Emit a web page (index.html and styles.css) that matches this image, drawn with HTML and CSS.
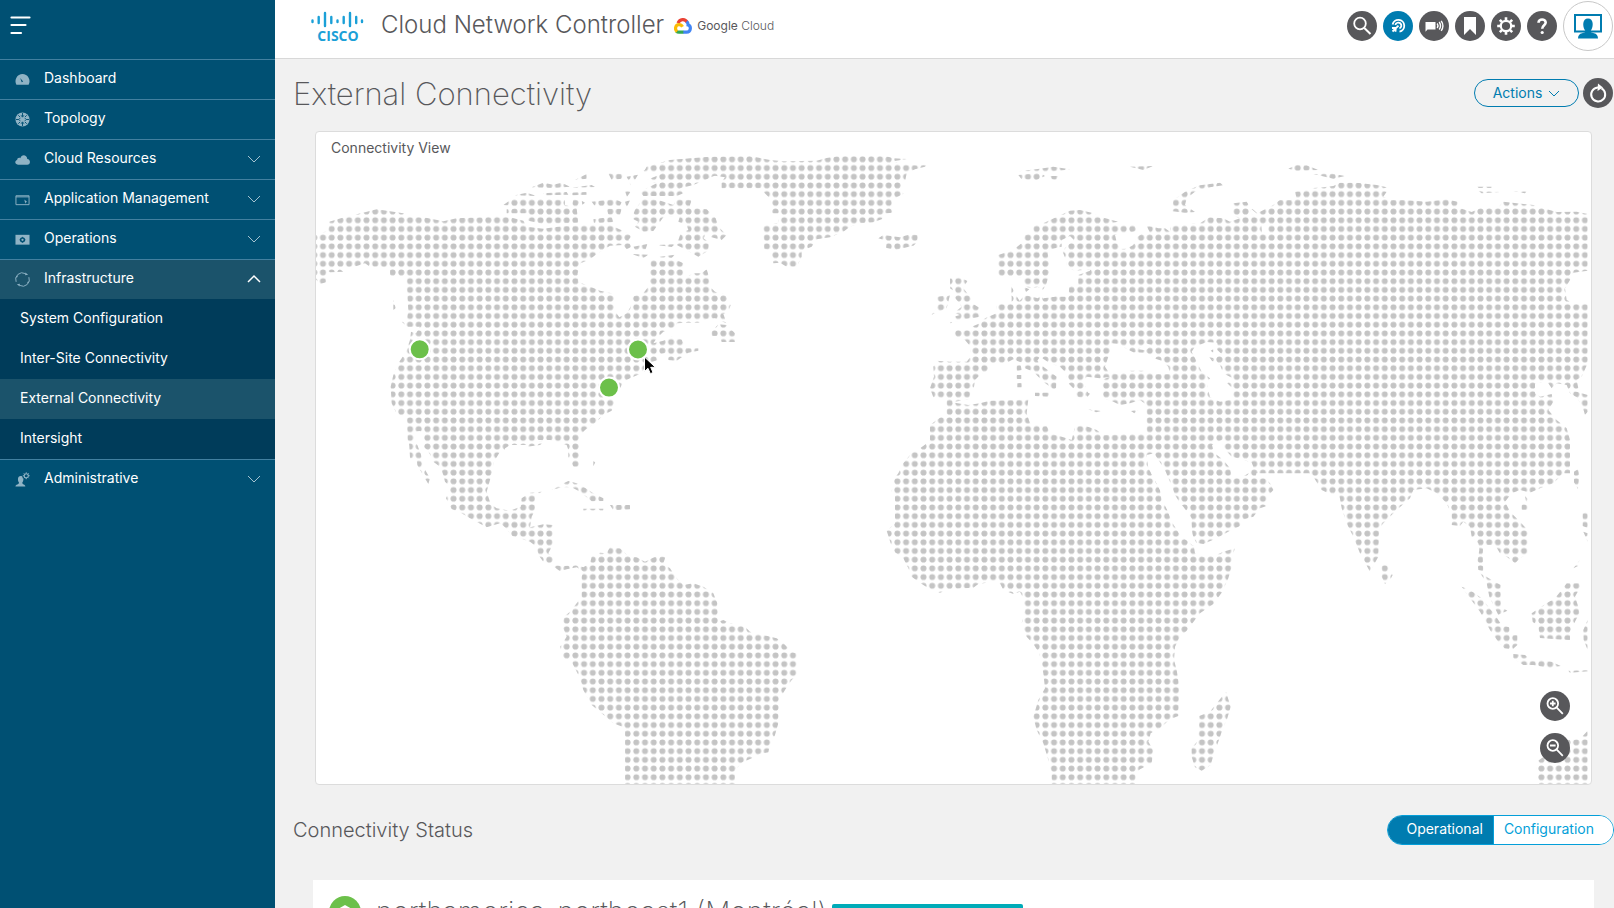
FILE: index.html
```html
<!DOCTYPE html>
<html lang="en">
<head>
<meta charset="utf-8">
<title>Cloud Network Controller</title>
<link rel="stylesheet" href="styles.css">
</head>
<body>
<div class="app">
  <aside class="sidebar">
    <div class="sidebar-top">
      <button class="menu-toggle" aria-label="Toggle menu">
        <svg width="22" height="20" viewBox="0 0 22 20" fill="none" stroke="#fff" stroke-width="2.2" stroke-linecap="round"><path d="M2.500 2.500h18M2.500 10h14M2.500 18h9.500"/></svg>
      </button>
    </div>
    <nav class="nav">
      <a class="nav-item" href="#dashboard">
        <svg class="nav-icon" viewBox="0 0 16 16"><path fill="currentColor" fill-rule="evenodd" d="M1.500 13.500A7.500 7.500 0 1 1 14.500 13.500zM5.500 6.500l1.700 4.300 1.500-.8z"/></svg>
        <span class="nav-label">Dashboard</span>
      </a>
      <a class="nav-item" href="#topology">
        <svg class="nav-icon" viewBox="0 0 16 16"><circle cx="8" cy="8" r="7.500" fill="currentColor"/><path d="M8 1v4M6.500 3.500L8 5.500l1.500-2M8 15v-4M6.500 12.500L8 10.500l1.500 2M1 8h3M5.500 6.500L4 8l1.500 1.500M15 8h-3M10.500 6.500L12 8l-1.500 1.500M3.500 3.500l2 2M12.500 3.500l-2 2M3.500 12.500l2-2M12.500 12.500l-2-2" stroke="#005073" fill="none"/></svg>
        <span class="nav-label">Topology</span>
      </a>
      <a class="nav-item" href="#resources">
        <svg class="nav-icon" viewBox="0 0 16 16"><path fill="currentColor" d="M3.200 13.500C-.4 13.500-.6 9.300 2.300 8.600 2.300 6.600 4.300 5.600 5.700 6.600c1-4 6.800-4.400 7.400.9 3.900.5 3.700 6-.1 6z"/></svg>
        <span class="nav-label">Cloud Resources</span>
        <svg class="chevron" viewBox="0 0 14 8"><path d="M1 1l6 6 6-6"/></svg>
      </a>
      <a class="nav-item" href="#applications">
        <svg class="nav-icon" viewBox="0 0 16 16"><path fill="none" stroke="currentColor" d="M1 4h14v9.500H1zM1 5.200h14"/><path fill="currentColor" d="M10 8l3 2.600-1.300.3-.8 1.500z"/></svg>
        <span class="nav-label">Application Management</span>
        <svg class="chevron" viewBox="0 0 14 8"><path d="M1 1l6 6 6-6"/></svg>
      </a>
      <a class="nav-item" href="#operations">
        <svg class="nav-icon" viewBox="0 0 16 16"><path fill="currentColor" d="M.5 3h15v10.500H.5z"/><circle cx="8" cy="8.300" r="2" fill="none" stroke="#005073" stroke-width="1.600"/><path stroke="#005073" d="M8 5.200v1M8 10.400v1M4.900 8.300h1M10.100 8.300h1"/></svg>
        <span class="nav-label">Operations</span>
        <svg class="chevron" viewBox="0 0 14 8"><path d="M1 1l6 6 6-6"/></svg>
      </a>
      <a class="nav-item nav-item-open" href="#infrastructure">
        <svg class="nav-icon" viewBox="0 0 16 16"><path fill="none" stroke="currentColor" d="M1.200 10.500A7 7 0 0 1 11 1.700M14.800 5.500A7 7 0 0 1 5 14.300M2.700 4L1.700 6M13.300 12l1-2"/><path fill="currentColor" d="M11 .5l3 2.500-3.200.5zM5 15.500L2 13l3.200-.5z"/></svg>
        <span class="nav-label">Infrastructure</span>
        <svg class="chevron chevron-open" viewBox="0 0 14 8"><path d="M1 7l6-6 6 6"/></svg>
      </a>
      <div class="subnav">
        <a class="subnav-item" href="#system">System Configuration</a>
        <a class="subnav-item" href="#intersite">Inter-Site Connectivity</a>
        <a class="subnav-item subnav-item-active" href="#external" aria-current="page">External Connectivity</a>
        <a class="subnav-item" href="#intersight">Intersight</a>
      </div>
      <a class="nav-item" href="#administrative">
        <svg class="nav-icon" viewBox="0 0 16 16"><path fill="currentColor" d="M.5 15.500c0-2.500 3.800-2 3.800-4C2.600 9 2.600 4.500 6 4.300c1.200 0 2 .5 2 1.200 0 .8.500 1.500 1 2C9 9 8.500 10.500 7.700 11.500c0 2 3.300 1.500 3.300 4z"/><circle cx="12" cy="4" r="2.200" fill="none" stroke="currentColor" stroke-width="1.200"/><path stroke="currentColor" d="M12 .3v1.500M12 6.200v1.500M8.300 4h1.500M14.200 4h1.500M9.400 1.400l1 1M13.600 5.600l1 1M14.600 1.400l-1 1M10.400 5.600l-1 1"/></svg>
        <span class="nav-label">Administrative</span>
        <svg class="chevron" viewBox="0 0 14 8"><path d="M1 1l6 6 6-6"/></svg>
      </a>
    </nav>
  </aside>

  <div class="page">
    <header class="topbar">
      <div class="cisco">
        <svg class="cisco-bars" viewBox="0 0 54 18" fill="none" stroke="#1ba0d7" stroke-width="2.400" stroke-linecap="round"><path d="M1.500 9.500v1.500M7.700 6v6M14 2v13M20.300 6v6M26.500 9.500v1.500M32.700 6v6M39 2v13M45.200 6v6M51 9.500v1.500"/></svg>
        <span class="cisco-word">CISCO</span>
      </div>
      <div class="product">Cloud Network Controller</div>
      <div class="gcloud">
        <svg class="gcloud-mark" viewBox="0 0 18 16" fill="none" stroke-width="3.200"><path stroke="#ea4335" d="M4 5.200C5.800 1 10.700.2 13.300 4.300"/><path stroke="#4285f4" d="M12.600 3.400c1.200 1 1.600 2.500 1.500 3.600 3.200.8 3.200 7.200-1.600 7.200H9"/><path stroke="#34a853" d="M9.300 14.200H5c-1 0-2-.4-2.700-1"/><path stroke="#fbbc05" d="M3.100 13.600C.5 11.500 1.300 6.700 5 6.700c1.500 0 2.800.8 3.500 2.100"/></svg>
        <span class="gcloud-name"><b>Google</b> Cloud</span>
      </div>
      <div class="tools">
        <button class="round" aria-label="Search"><svg viewBox="0 0 30 30"><circle cx="13" cy="12.500" r="5.800"/><path d="M17.300 17l6.200 6" stroke-width="2"/></svg></button>
        <button class="round round-blue" aria-label="Targets"><svg viewBox="0 0 30 30"><path d="M9.600 13.500A5.900 5.900 0 1 1 16.500 20.600M12.400 14a3 3 0 1 1 4 3.400"/><path d="M15.500 14.700L9.500 20.500M9 17l3.800-.3-.3 4"/></svg></button>
        <button class="round" aria-label="Announcements"><svg viewBox="0 0 30 30"><path fill="#fff" stroke="none" d="M6.500 11h10v7.500h-8l-2 2.200z"/><path stroke-width="1.400" d="M18.200 12.500q1.500 2.200 0 4.500M20.200 11q2.600 4 0 7.500M22.200 9.800q3.400 5 0 10"/></svg></button>
        <button class="round" aria-label="Bookmarks"><svg viewBox="0 0 30 30"><path fill="#fff" stroke="none" d="M9 6h12v18l-6-6-6 6z"/></svg></button>
        <button class="round" aria-label="Settings"><svg viewBox="0 0 30 30"><circle cx="15" cy="15" r="5.200" stroke-width="2.200"/><path stroke-width="2.600" d="M15 6.200v3M15 20.800v3M6.200 15h3M20.800 15h3M8.800 8.800l2.100 2.100M19.100 19.100l2.100 2.100M21.200 8.800l-2.100 2.100M10.900 19.100l-2.100 2.100"/></svg></button>
        <button class="round" aria-label="Help"><svg viewBox="0 0 30 30"><path stroke-width="2.600" d="M11.500 11.800c0-4.500 7.200-4.200 7.200-.3 0 2.700-3.500 2.700-3.500 6.200"/><circle cx="15.200" cy="21.500" r="1.600" fill="#fff" stroke="none"/></svg></button>
        <button class="avatar" aria-label="User profile"><svg viewBox="0 0 30 26"><path fill="none" stroke="#007cb0" stroke-width="2" d="M2 2h26v16.500H2z"/><path fill="#007cb0" d="M5 25.500c0-3 1.500-4.800 4-5.300l3-1c.5-.3.300-1.500-.2-2.200C9.500 13.500 9.200 5.500 15 5.500s5.500 8 3.200 11.500c-.5.700-.7 1.900-.2 2.200l3 1c2.500.5 4 2.300 4 5.300z"/></svg></button>
      </div>
    </header>

    <main class="content">
      <div class="title-row">
        <h1 class="title">External Connectivity</h1>
        <div class="title-actions">
          <button class="actions">Actions <svg class="actions-arrow" viewBox="0 0 12 8"><path d="M1 1l5 5 5-5"/></svg></button>
          <button class="round" aria-label="Refresh"><svg viewBox="0 0 30 30"><path stroke-width="2" d="M18.500 10.300a7 7 0 1 1-4-.8h3"/><path fill="#fff" stroke="none" d="M15 5.500l5 4-5.500 3.500z"/></svg></button>
        </div>
      </div>

      <section class="map-panel">
        <h2 class="map-title">Connectivity View</h2>
        <svg class="map" viewBox="316 156 1275 628" role="img" aria-label="World map with three connected regions">
          <defs>
            <pattern id="dots" patternUnits="userSpaceOnUse" x="318.650" y="163.650" width="8.703" height="8.703"><circle cx="4.350" cy="4.350" r="3" fill="#c4c4c4"/></pattern>
            <mask id="land" maskUnits="userSpaceOnUse" x="310" y="130" width="1290" height="660">
              <!-- North America -->
              <g transform="translate(310 130) scale(.33333)" fill="#fff">
                <path d="M0 315L30 312 55 300 58 275 95 264 130 255 165 247 200 238 240 244 280 250 300 260 340 262 400 274 440 265 510 262 560 258 600 262 640 272 650 290 700 296 760 288 830 285 900 285 945 305 965 318 955 330 965 350 950 358 940 345 900 347 860 372 840 388 812 400 803 430 805 455 830 466 870 482 905 490 915 500 912 540 928 562 950 550 962 530 965 500 1000 490 1015 470 1020 440 1022 395 1030 388 1060 392 1100 390 1120 400 1120 430 1125 445 1150 430 1175 430 1190 418 1197 440 1200 470 1215 485 1245 493 1262 525 1255 545 1240 552 1250 580 1230 572 1215 565 1190 568 1165 578 1130 578 1100 580 1095 592 1060 605 1040 625 1030 640 1060 632 1085 620 1115 628 1120 640 1130 655 1165 655 1165 662 1135 668 1100 692 1075 690 1070 668 1040 675 1045 690 1010 700 995 730 960 745 940 755 930 775 915 790 912 820 905 842 880 855 855 880 825 900 807 920 807 990 785 990 770 945 720 930 680 930 655 945 600 945 570 965 555 990 370 990 343 945 338 905 328 903 315 905 312 915 315 940 330 965 335 990 300 985 305 960 293 930 290 860 262 855 245 820 242 770 250 735 265 700 275 685 290 660 300 630 303 605 318 610 330 590 292 590 275 575 290 570 295 540 290 470 290 440 240 437 240 415 210 410 180 410 165 400 140 408 120 412 80 410 100 425 60 427 50 420 48 457 30 462 20 450 0 455z"/>
                <path d="M580 225L605 207 680 205 765 210 765 225 785 230 790 208 810 212 800 235 805 278 700 282 655 272 650 250 590 250 590 238 640 232zM615 196l35-8 30 10zM700 190l70-4 5 8-70 2zM665 172L700 158l30 6 25-6 25 12-50 4zM795 150L830 132v14zM895 130l45 2-5 14-30 4zM780 188l50-2v8l-48 2zM845 165l-60 8 70-2zM845 215l70-8 20 10-5 10-75 2zM890 236h45l-5 18h-35zM850 268l55-8 5 16-58 4zM815 212l10 6-8 6zM945 184h18l-12 16zM950 140l34-6-20 34zM945 215l15-4-10 22z"/>
                <path d="M975 240L1000 205 1045 210 1090 225 1100 208 1145 210 1138 232 1190 238 1217 265 1225 290 1250 315 1235 330 1205 322 1180 322 1197 340 1195 362 1165 380 1125 358 1100 345 1112 310 1135 300 1130 285 1105 275 1110 258 1060 262 1030 303 1000 305 975 290 985 275 965 265zM970 350l42-8-5 16-32 2zM965 372l50 2-15 10zM1040 345l55-2-10 8zM1040 382l55-8-10 10z"/>
                <path d="M1000 122L1040 100 1090 90 1200 82 1250 90 1230 130 1190 148 1150 165 1110 175 1120 190 1100 198 1000 198 990 185 1040 160 1010 150 1060 130zM1205 605l20-22 25 2 15 15 10 10v26h-40l-5-18h-25zM250 510l8 25-8 5z"/>
                <path fill="#000" d="M1115 600L1140 587 1200 590 1198 605 1170 620 1175 640 1125 645 1112 622zM1040 285l60-18 10 18-20 25-50 12zM1185 310l20 2-8 20-15-5zM1060 108l80 4-80 3zM1250 105l50 12-40 3z"/>
              </g>
              <!-- Central and South America -->
              <g transform="translate(380 430) scale(.33333)" fill="#fff">
                <path d="M160 75L160 95 180 110 190 135 195 155 212 172 198 205 215 237 245 250 270 265 320 292 360 280 375 292 395 317 420 325 450 335 470 350 475 375 490 395 515 405 540 424 560 418 590 412 610 425 605 440 605 500 590 520 570 545 552 560 548 590 560 620 540 650 550 685 575 695 600 745 610 780 635 825 665 850 700 880 735 893 735 1065 1065 1065 1065 1020 1085 998 1115 985 1140 972 1165 967 1170 945 1185 915 1195 880 1197 810 1215 780 1235 750 1250 735 1250 670 1235 665 1210 640 1190 625 1150 615 1110 605 1095 590 1050 580 1030 570 1015 575 1012 520 1000 490 970 470 940 460 910 465 890 445 870 415 850 400 857 380 830 378 795 395 770 382 745 378 720 355 690 352 680 370 660 368 635 380 630 400 610 412 590 405 550 408 520 405 518 380 505 370 518 345 518 285 490 283 450 292 455 260 465 240 465 200 485 185 450 188 425 205 422 230 390 242 350 235 332 222 320 185 330 150 340 110 345 75 375 60 375 0 130 0 130 50z"/>
                <path d="M565 20L595 0 597 110 580 110 565 80zM85 0L95 30 112 45 125 80 130 110 150 145 145 162 132 140 112 105 110 85 90 82zM515 180L540 165 565 153 590 160 610 170 640 190 670 205 670 213 635 214 600 185 575 172 545 172zM690 225h60v13l-50 3zM610 236h60v6h-60zM640 92l6 5-6 12zM500 30l-20 15-40 5 10-12z"/>
              </g>
              <!-- Greenland, Europe and the Mediterranean -->
              <g transform="translate(750 150) scale(.33333)" fill="#fff">
                <path d="M-85 95L-75 82-120 75-320 68-310 50-240 30-120 20 0 18 30 24 60 30 100 34 200 32 230 24 280 16 400 16 430 25 470 27 430 34 450 42 500 46 530 44 525 50 495 58 470 70 465 95 452 100 460 132 440 142 425 152 428 188 408 190 395 208 370 217 330 220 300 230 280 245 240 262 200 268 185 290 155 302 155 320 140 350 110 350 90 338 70 340 60 300 42 297 40 228 85 218 90 190 62 190 65 150 40 125 30 115-85 115z"/>
                <path d="M385 265L400 255 450 262 480 253 503 255 503 275 490 287 435 300 408 293 410 272zM805 75L870 68 885 78 860 90 815 88zM805 64L870 56 910 50 960 58 900 66zM900 78h25l-5 12-15-2zM1140 50l70-2-30 12z"/>
                <path d="M600 385L630 382 652 393 640 415 660 440 670 462 690 475 690 500 665 505 640 508 600 520 612 500 630 495 612 488 635 470 625 455 612 440 615 425 600 415zM562 440L600 435 590 475 545 494 562 470z"/>
                <path d="M960 182L990 180 1025 188 1050 200 1105 215 1080 220 1110 226 1155 225 1160 243 1130 250 1095 255 1100 275 1110 297 1130 296 1150 285 1160 262 1175 252 1200 248 1190 228 1210 230 1225 235 1245 235 1260 245 1290 228 1400 222 1400 970 455 970 460 940 485 908 515 895 540 870 540 825 560 810 590 790 590 745 550 742 540 715 552 680 550 650 560 632 600 635 650 635 662 620 662 590 645 570 612 558 615 540 660 540 665 530 690 520 705 505 740 490 740 462 785 460 785 405 800 395 790 378 745 378 745 315 790 300 820 275 825 255 850 248 850 228 875 222z"/>
                <g fill="#000">
                  <path d="M605 757L655 765 690 760 720 752 790 750 835 748 830 790 840 820 890 828 900 850 940 862 965 870 975 830 1000 825 1040 840 1060 855 1190 850 1190 765 1170 750 1140 760 1110 765 1090 755 1060 745 1055 690 1080 680 1050 685 1010 680 1000 695 1015 730 1005 745 980 740 975 720 955 700 945 665 930 650 900 640 870 620 862 632 880 650 920 680 918 715 900 725 895 740 855 738 855 728 895 728 900 710 880 695 850 665 825 655 820 640 790 628 770 638 720 640 716 660 690 675 675 690 672 710 662 722 658 748z"/>
                  <path d="M1080 605L1085 580 1110 582 1130 597 1150 607 1190 608 1212 625 1235 632 1255 650 1260 672 1220 672 1180 662 1140 662 1100 672 1075 665 1065 650 1075 620zM1165 598l20-18 20 5-18 16z"/>
                  <path d="M935 270L960 258 972 270 948 290 938 305 948 330 950 350 975 362 1020 358 1020 362 985 375 985 402 958 410 955 440 915 440 880 447 870 432 888 405 895 380 900 345 893 310 905 297 935 290zM800 380l22 5v24l22 6 20-4 22 12-22 22-40-10-15 18-25-40z"/>
                  <path d="M1335 590L1400 578 1400 620 1350 670 1330 625z"/>
                </g>
                <path d="M800 645h12l3 15-15 3zM800 675h14v12h-14zM802 700l13-2v14h-13zM1015 778l38 5-15 4zM1143 783l22-3-12 10zM855 730h38l-18 12zM785 410l10 20-10 10zM880 445l40-5 30 6v10h-70zM820 410l18 8-10 8zM1008 725l12 6-8 10z"/>
              </g>
              <!-- Northern Asia -->
              <g transform="translate(1170 150) scale(.33333)">
                <path fill="#fff" d="M0 228L50 222 90 220 118 202 160 205 180 215 210 205 190 198 190 160 230 155 240 170 262 190 288 176 310 165 330 150 360 150 380 146 375 125 400 122 430 114 460 112 490 108 510 98 560 98 620 105 650 112 630 120 650 125 640 140 660 150 700 150 770 155 830 148 862 155 865 172 880 178 905 186 930 175 985 172 1000 155 1090 165 1120 175 1160 186 1220 185 1253 192 1253 362 1210 368 1200 390 1185 415 1190 450 1215 462 1253 460 1253 640 1235 680 1220 690 1225 715 1210 722 1253 735 1253 785 1245 795 1238 770 1220 742 1200 730 1190 705 1160 700 1145 715 1130 692 1095 702 1095 730 1110 740 1145 732 1150 755 1135 780 1160 810 1190 835 1200 870 1200 970 0 970z"/>
                <path fill="#fff" d="M8 165L10 150 50 122 90 106 150 98 160 106 120 112 75 125 50 145 45 165 75 186 45 188 8 184zM355 56L380 44 410 46 445 60 380 62zM430 72L480 70 525 78 490 86zM920 110h45v4h-45zM925 122l65 4-55 4zM1030 124h40l-5 6z"/>
                <path fill="#000" d="M75 590L110 576 142 578 142 600 155 612 135 618 125 632 150 645 160 670 188 685 172 700 190 718 190 748 150 755 120 742 110 700 120 685 95 665 75 625 65 605zM245 178l18 15-4 10-20-15zM274 225l22-8-2 28-18 6z"/>
                <path fill="#fff" d="M122 602l8-4v10zM118 622l12 2-4 8z"/>
              </g>
              <!-- Africa -->
              <g transform="translate(870 440) scale(.33333)" fill="#fff">
                <path d="M185 0L150 25 125 45 100 70 85 100 70 120 65 155 75 165 75 250 50 272 62 310 75 337 100 355 115 385 125 410 160 435 185 450 210 458 240 447 310 443 325 432 370 425 390 430 400 450 430 462 450 455 460 475 465 510 455 550 470 590 490 612 508 640 520 700 525 745 505 780 490 830 500 870 520 910 535 960 545 1000 545 1035 797 1035 797 998 810 988 845 970 850 930 835 905 842 880 870 865 900 838 925 828 928 740 920 690 912 660 915 620 930 590 950 572 990 520 1030 492 1055 458 1075 415 1085 380 1085 355 1095 325 1060 335 1045 342 1000 350 975 340 970 310 940 285 910 250 895 215 875 180 870 150 850 110 830 80 820 50 830 0z"/>
                <path d="M1068 755L1082 800 1072 835 1057 870 1045 905 1032 940 1022 975 995 992 975 982 965 950 965 925 985 900 988 828 1020 815 1040 790z"/>
              </g>
              <!-- Southern Asia -->
              <g transform="translate(1170 440) scale(.33333)">
                <path fill="#fff" d="M-80 0L-55 40-30 75-10 110 0 140 10 170 40 200 65 235 65 280 78 308 100 312 140 295 180 272 210 258 215 240 250 230 270 205 290 198 290 172 310 150 300 130 285 115 258 108 262 85 270 80 300 82 350 90 400 85 430 110 455 150 475 160 508 165 515 205 530 250 550 290 570 340 600 395 625 350 628 265 640 250 680 210 720 175 730 150 770 145 800 160 830 190 845 225 845 255 870 258 880 245 900 260 905 290 925 310 928 330 922 365 925 390 940 393 938 345 940 315 975 315 990 340 1010 350 1035 370 1050 355 1073 340 1073 270 1050 245 1020 215 1005 185 1025 160 1050 150 1080 158 1110 145 1150 130 1180 100 1200 60 1200 0z"/>
                <path fill="#fff" d="M930 398L965 420 992 435 993 500 1012 512 985 525 958 470 950 430zM1085 520L1125 493 1155 475 1175 450 1190 430 1228 430 1230 443 1215 470 1225 500 1228 520 1215 545 1200 575 1200 600 1160 598 1110 594 1105 560 1088 545zM875 440L900 450 935 475 955 500 975 525 995 555 1018 562 1020 585 1042 585 1042 615 1028 628 1003 625 985 605 960 570 930 515 900 475zM1030 642L1065 645 1085 662 1115 660 1145 665 1172 678 1140 684 1090 675 1060 675 1030 655zM1195 692l60-2v4l-55 4zM1240 570l13-30v90l-12-30zM1055 193h18v16h-18zM1212 95l12-8 4 20-4 40-12-20zM1238 220l15-6v50l-15-6zM1240 275l13 5v25zM1210 385l20-25-6 18zM1100 1040V965L1150 930 1195 900 1230 897 1253 872V1040zM635 375L650 372 668 405 660 420 645 432 635 410zM1065 168l12 12-8 8z"/>
                <path fill="#000" d="M126 15L155 0 162 25 185 50 215 58 245 68 250 80 238 98 222 108 200 112 185 108 180 85 160 60 132 38zM930 398l-18-10 8-4zM-70 45L-48 40-15 90 8 145 15 165 40 205 62 240 68 285 78 308 70 318 30 285 5 245-10 205-25 160-45 120-65 85z"/>
              </g>
            </mask>
          </defs>
          <rect x="316" y="130" width="1272" height="654" fill="url(#dots)" mask="url(#land)"/>
          <g fill="#6cc04a" stroke="#fff" stroke-width="2">
            <circle cx="419.700" cy="349.300" r="10"/>
            <circle cx="638" cy="349.500" r="10"/>
            <circle cx="609" cy="387.600" r="10"/>
          </g>
          <path d="M644.500 357v14.500l3.500-3.200 2.400 5.400 2.600-1.200-2.300-5.200h4.700z" fill="#000" stroke="#fff"/>
        </svg>
        <div class="zoom-controls">
          <button class="round" aria-label="Zoom in"><svg viewBox="0 0 30 30"><circle cx="12.800" cy="12.500" r="5.300"/><path d="M16.800 16.600l6 6.200M10 12.500h5.600M12.800 9.700v5.600"/></svg></button>
          <button class="round" aria-label="Zoom out"><svg viewBox="0 0 30 30"><circle cx="12.800" cy="12.500" r="5.300"/><path d="M16.800 16.600l6 6.200M10 12.500h5.600"/></svg></button>
        </div>
      </section>

      <div class="status-row">
        <h2 class="status-title">Connectivity Status</h2>
        <div class="segmented">
          <button class="segment segment-active" aria-pressed="true">Operational</button>
          <button class="segment" aria-pressed="false">Configuration</button>
        </div>
      </div>

      <section class="region-card">
        <svg class="region-icon" viewBox="0 0 32 32"><circle cx="16" cy="16" r="16" fill="#6cc04a"/><path d="M16 9l7 4v8l-7 4-7-4v-8z" fill="#fff"/></svg>
        <h3 class="region-name">northamerica-northeast1 (Montréal)</h3>
        <span class="region-badge"></span>
      </section>
    </main>
  </div>
</div>
</body>
</html>
```
FILE: styles.css
```css
* {
  box-sizing: border-box;
}

body {
  margin: 0;
  font-family: Inter, "Liberation Sans", sans-serif;
  font-size: 14px;
  color: #58585b;
  background: #f1f1f1;
}

h1, h2, h3 {
  margin: 0;
  font-weight: 300;
}

button {
  font: inherit;
  border: 0;
  padding: 0;
  background: none;
  cursor: pointer;
}

svg {
  display: block;
}

.app {
  display: flex;
  height: 100vh;
  overflow: hidden;
}

/* Sidebar */
.sidebar {
  flex: 0 0 275px;
  background: #005073;
}

.sidebar-top {
  height: 59px;
  padding: 15px 9px;
}

.nav-item {
  display: flex;
  align-items: center;
  height: 40px;
  padding: 0 14px 4px 15px;
  gap: 14px;
  border-top: 1px solid #4280a0;
  color: #fff;
  text-decoration: none;
}

.nav-item-open {
  background: #1b536b;
}

.nav-icon {
  width: 15px;
  height: 15px;
  margin-top: 4px;
  color: #8fb3c5;
}

.nav-label {
  flex: 1;
}

.chevron {
  width: 14px;
  height: 8px;
  margin-top: 2px;
  fill: none;
  stroke: #a5c2d0;
  overflow: visible;
}

.chevron-open {
  stroke: #fff;
  stroke-width: 1.5;
}

.subnav {
  background: #003c5a;
}

.subnav-item {
  display: flex;
  align-items: center;
  height: 40px;
  padding: 0 20px 4px;
  color: #fff;
  text-decoration: none;
}

.subnav-item-active {
  background: #1b536b;
}

/* Top bar */
.page {
  flex: 1;
  min-width: 0;
  display: flex;
  flex-direction: column;
}

.topbar {
  display: flex;
  align-items: flex-start;
  height: 59px;
  flex: none;
  padding: 1px 1px 0 36px;
  background: #fff;
  border-bottom: 1px solid #d8d8d8;
}

.cisco {
  display: flex;
  flex-direction: column;
  align-items: center;
  width: 54px;
  padding-top: 10px;
}

.cisco-bars {
  width: 54px;
  height: 18px;
}

.cisco-word {
  font-family: "Open Sans", sans-serif;
  font-size: 14px;
  font-weight: 700;
  line-height: 13px;
  color: #1ba0d7;
}

.product {
  margin-left: 16px;
  font-size: 24px;
  font-weight: 300;
  line-height: 48px;
}

.gcloud {
  display: flex;
  align-items: center;
  gap: 5px;
  height: 50px;
  margin-left: 10px;
}

.gcloud-mark {
  width: 18px;
  height: 16px;
}

.gcloud-name {
  font-size: 12px;
  font-weight: 300;
  line-height: 20px;
}

.gcloud-name b {
  font-weight: 400;
}

.tools {
  display: flex;
  align-items: center;
  gap: 6px;
  margin-left: auto;
}

.round {
  width: 30px;
  height: 30px;
  border-radius: 50%;
  background: #58585b;
}

.round svg {
  width: 30px;
  height: 30px;
  fill: none;
  stroke: #fff;
  stroke-width: 1.8;
}

.round-blue {
  background: #007cb0;
}

.avatar {
  display: flex;
  align-items: center;
  justify-content: center;
  width: 50px;
  height: 50px;
  border: 1px solid #c8c8c8;
  border-radius: 50%;
  background: #fff;
}

.avatar svg {
  width: 30px;
  height: 26px;
}

/* Content */
.content {
  flex: 1;
  min-height: 0;
  overflow-y: auto;
  scrollbar-width: none;
}

.title-row,
.status-row {
  display: flex;
  align-items: center;
  justify-content: space-between;
  padding: 0 1px 0 18px;
}

.title-row {
  height: 72px;
  padding-bottom: 4px;
}

.title {
  padding-top: 2px;
  font-size: 31px;
  font-weight: 200;
  line-height: 40px;
}

.title-actions {
  display: flex;
  align-items: center;
  gap: 4px;
}

.actions {
  display: flex;
  align-items: center;
  justify-content: center;
  gap: 6px;
  width: 105px;
  height: 28px;
  padding-bottom: 2px;
  border: 1px solid #007cb0;
  border-radius: 14px;
  color: #007cb0;
}

.actions-arrow {
  width: 12px;
  height: 8px;
  margin-top: 4px;
  fill: none;
  stroke: #007cb0;
}

.map-panel {
  position: relative;
  margin: 0 22px 0 40px;
  overflow: hidden;
  background: #fff;
  border: 1px solid #dcdcdc;
  border-radius: 4px;
}

.map-title {
  padding: 8px 15px 0;
  font-size: 14px;
  font-weight: 400;
  line-height: 16px;
}

.map {
  width: 100%;
  height: auto;
}

.zoom-controls {
  position: absolute;
  right: 21px;
  bottom: 21px;
  display: grid;
  gap: 12px;
}

.status-row {
  height: 95px;
  padding: 0 0 6px 18px;
}

.status-title {
  font-size: 20px;
}

.segmented {
  display: flex;
  height: 30px;
  overflow: hidden;
  border: 1px solid #049fd9;
  border-radius: 15px;
}

.segment {
  padding: 0 19px 2px 10px;
  color: #049fd9;
  background: #fff;
}

.segment-active {
  padding: 0 10px 2px 18px;
  color: #fff;
  background: #007cb0;
  border-right: 1px solid #049fd9;
}

.region-card {
  display: flex;
  align-items: flex-start;
  margin: 0 20px 0 38px;
  padding: 16px;
  background: #fff;
}

.region-icon {
  width: 32px;
  height: 32px;
}

.region-name {
  margin: 0 5px 0 15px;
  font-size: 28px;
  font-weight: 200;
  line-height: 32px;
}

.region-badge {
  width: 191px;
  height: 24px;
  margin-top: 8px;
  border-radius: 2px;
  background: #00abb8;
}
```
